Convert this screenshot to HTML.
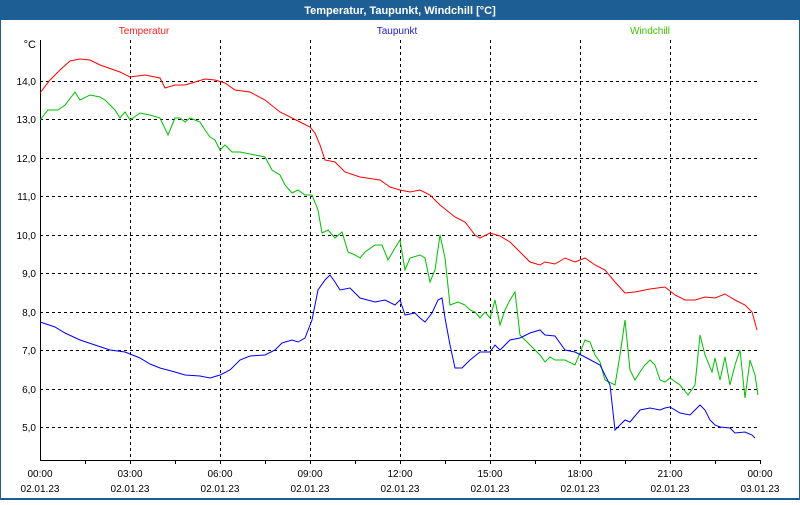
<!DOCTYPE html>
<html><head><style>
body{margin:0;width:800px;height:500px;overflow:hidden;background:#fff;font-family:"Liberation Sans",sans-serif}
</style></head><body>
<svg width="800" height="500" xmlns="http://www.w3.org/2000/svg" font-family="Liberation Sans, sans-serif" font-size="10">
<rect x="0" y="0" width="800" height="500" fill="#fff"/>
<rect x="0" y="0" width="800" height="20" fill="#1d5e95"/>
<rect x="0" y="0" width="1" height="500" fill="#1d5e95"/>
<rect x="799" y="0" width="1" height="500" fill="#1d5e95"/>
<rect x="0" y="498" width="800" height="2" fill="#1d5e95"/>
<text x="400" y="14" fill="#fff" font-weight="bold" font-size="11" text-anchor="middle">Temperatur, Taupunkt, Windchill [°C]</text>
<text x="144" y="34" fill="#ff2020" text-anchor="middle">Temperatur</text>
<text x="397" y="34" fill="#2020d0" text-anchor="middle">Taupunkt</text>
<text x="650" y="34" fill="#40c000" text-anchor="middle">Windchill</text>
<text x="36" y="48" text-anchor="end" font-size="11">°C</text>
<g stroke="#000" stroke-dasharray="3,3" stroke-width="1">
<path d="M40 81.5H760M40 119.5H760M40 158.5H760M40 196.5H760M40 235.5H760M40 273.5H760M40 312.5H760M40 350.5H760M40 389.5H760M40 427.5H760"/>
<path d="M130.5 40V460M220.5 40V460M310.5 40V460M400.5 40V460M490.5 40V460M580.5 40V460M670.5 40V460"/>
</g>
<path d="M40.5 40V460.5H760.5V464" stroke="#000" fill="none"/>
<g stroke="#000"><path d="M85.5 460v4M130.5 460v4M175.5 460v4M220.5 460v4M265.5 460v4M310.5 460v4M355.5 460v4M400.5 460v4M445.5 460v4M490.5 460v4M535.5 460v4M580.5 460v4M625.5 460v4M670.5 460v4M715.5 460v4"/></g>
<g text-anchor="end" font-size="10">
<text x="36" y="85">14,0</text><text x="36" y="123">13,0</text><text x="36" y="162">12,0</text><text x="36" y="200">11,0</text><text x="36" y="239">10,0</text><text x="36" y="277">9,0</text><text x="36" y="316">8,0</text><text x="36" y="354">7,0</text><text x="36" y="393">6,0</text><text x="36" y="431">5,0</text>
</g>
<g text-anchor="middle" font-size="10">
<text x="40" y="477">00:00</text><text x="130" y="477">03:00</text><text x="220" y="477">06:00</text><text x="310" y="477">09:00</text><text x="400" y="477">12:00</text><text x="490" y="477">15:00</text><text x="580" y="477">18:00</text><text x="670" y="477">21:00</text><text x="760" y="477">00:00</text>
<text x="40" y="492">02.01.23</text><text x="130" y="492">02.01.23</text><text x="220" y="492">02.01.23</text><text x="310" y="492">02.01.23</text><text x="400" y="492">02.01.23</text><text x="490" y="492">02.01.23</text><text x="580" y="492">02.01.23</text><text x="670" y="492">02.01.23</text><text x="760" y="492">03.01.23</text>
</g>
<polyline fill="none" stroke="#ff0000" points="40,93 50,80 60,70 70,61 80,59 90,60 100,65 120,72 130,77 145,75 160,78 165,88 175,85 185,85 195,82 205,79 215,80 225,83 235,90 250,92 265,100 280,112 300,122 310,127 315,133 320,145 325,160 335,162 345,172 360,177 380,180 390,187 400,190 410,192 420,190 430,195 440,205 455,217 465,222 475,235 480,238 490,233 500,236 510,242 520,252 530,262 540,265 545,262 555,264 565,258 575,262 585,258 595,265 605,270 615,282 625,293 635,292 650,289 665,287 675,295 685,300 695,300 705,297 715,298 725,294 735,300 745,305 752,312 757,330"/>
<polyline fill="none" stroke="#00c000" points="40,120 48,110 58,110 65,105 75,92 80,100 90,95 100,97 105,100 115,110 120,118 125,112 130,120 140,113 150,115 160,118 168,135 175,118 180,118 185,122 190,118 200,122 205,130 210,137 215,140 220,150 225,145 232,152 240,152 255,155 265,157 272,170 280,175 285,185 292,193 298,190 305,195 312,195 318,210 322,233 328,230 335,238 342,232 348,252 355,255 360,258 365,252 375,245 382,245 388,260 395,248 400,240 405,270 410,258 420,255 425,258 430,282 435,270 440,235 445,258 450,305 458,302 465,305 470,310 475,312 480,318 485,312 490,318 495,300 500,325 505,310 510,300 515,292 520,335 525,340 530,345 540,355 545,362 550,357 555,360 565,360 575,365 580,353 585,340 590,342 595,355 600,362 605,380 615,385 620,355 625,320 630,370 635,380 640,372 645,365 650,360 655,365 660,380 665,382 670,378 680,385 688,395 695,385 700,335 705,355 712,372 715,358 720,380 725,357 730,385 735,365 740,350 745,398 750,360 755,375 758,395"/>
<polyline fill="none" stroke="#0000ff" points="40,322 55,327 65,333 80,340 95,345 110,350 125,352 140,358 150,364 160,368 175,372 185,375 200,376 210,378 220,375 230,370 240,360 250,356 265,355 275,350 282,343 292,340 298,342 305,338 312,320 318,290 325,280 330,275 335,282 340,290 350,288 360,298 375,302 385,300 395,305 400,300 405,315 415,313 420,318 425,322 432,313 438,300 442,298 445,318 450,345 455,368 462,368 470,360 480,352 490,352 495,345 500,350 510,340 520,338 530,333 540,330 545,335 555,336 565,350 575,352 585,357 600,365 605,375 610,385 615,430 620,425 625,420 630,422 640,410 650,408 660,410 665,408 670,407 680,413 690,415 695,410 700,405 705,410 710,420 715,425 720,427 730,428 735,433 745,432 752,435 755,438"/>
</svg>
</body></html>
